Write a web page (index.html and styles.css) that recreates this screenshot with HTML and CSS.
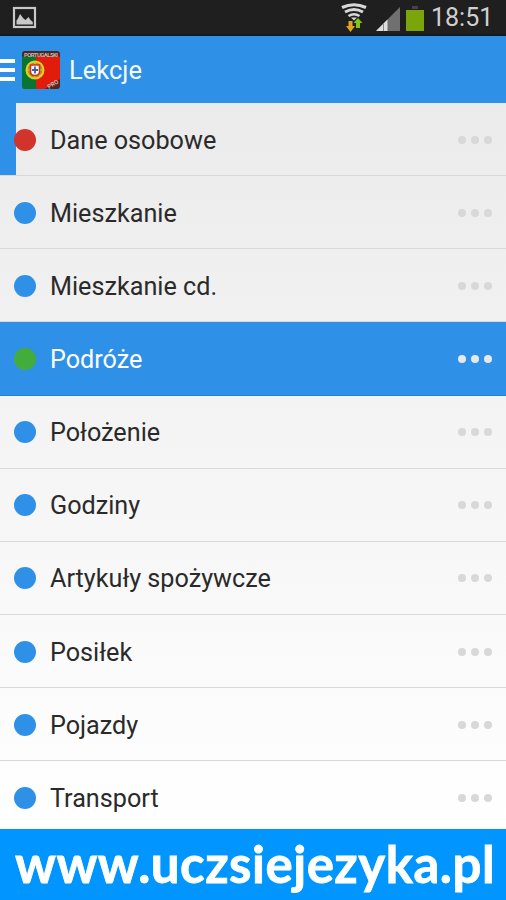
FILE: index.html
```html
<!DOCTYPE html>
<html lang="pl">
<head>
<meta charset="utf-8">
<title>Lekcje</title>
<link rel="stylesheet" href="styles.css">
</head>
<body>
<div class="status">
  <svg class="picture" width="26" height="24" viewBox="0 0 26 24"><rect x="2" y="2" width="21" height="19" fill="none" stroke="#c8c8c8" stroke-width="2.2"/><path d="M4.500 18.500v-4l1.500-2 2-4.500 3.500 4.500 2 1.500 3-3 2 3 2.300 2v2.500z" fill="#c8c8c8"/></svg>
  <div class="indicators">
    <svg width="28" height="30" viewBox="0 0 28 30"><g fill="none" stroke="#d8d8d8"><path d="M2 4.500Q14-1 26 4.500" stroke-width="3.200"/><path d="M5 9Q14 4 23 9" stroke-width="2.800"/><path d="M8.500 13Q14 9.500 19.500 13" stroke-width="2.500"/></g><path d="M11 14.500h6l-3 3z" fill="#d8d8d8"/><path d="M8.500 18h4v5h2.500l-4.500 6-4.500-6h2.500z" fill="#e0a51a"/><path d="M16 25v-5h-2.500l4.500-5 4.500 5H20v5z" fill="#7fc31c"/></svg>
    <svg class="signal" width="24" height="24" viewBox="0 0 24 24"><path d="M0 24L24 0v24z" fill="#707070"/><path d="M0 24L11.500 12.500V24z" fill="#dedede"/><path d="M7.500 16v8" stroke="#888" stroke-width="1"/></svg>
    <svg class="battery" width="18" height="26" viewBox="0 0 18 26"><path d="M6 1h6v3H6z" fill="#444"/><path d="M0 5h18v21H0z" fill="#7aa60b"/></svg>
    <span class="time">18:51</span>
  </div>
</div>
<header class="bar">
  <div class="menu"><i></i><i></i><i></i></div>
  <svg class="flag" width="38" height="38" viewBox="0 0 38 38">
    <defs><clipPath id="round"><rect width="38" height="38" rx="3.500"/></clipPath></defs>
    <g clip-path="url(#round)">
      <path d="M0 0h38v38H0z" fill="#e11c0c"/><path d="M0 0h14v38H0z" fill="#087632"/>
      <circle cx="13" cy="19" r="8.500" fill="#a99b22" stroke="#e5cf25" stroke-width="2"/>
      <path d="M4.500 19h17M13 10.500v17M7 13l12 12" stroke="#e5cf25" stroke-width="1.200"/>
      <path d="M8.500 14h9v6.500q0 4-4.500 4t-4.500-4z" fill="#fff" stroke="#d6301f" stroke-width="1.600"/>
      <path d="M13 15.500v7M10 19h6" stroke="#3c5ca8" stroke-width="1.800"/>
      <path d="M0 0h38v5.500H0z" fill="#4b2923"/>
      <text x="2" y="5.500" class="tag" textLength="34">PORTUGALSKI</text>
      <path d="M23 38L38 28v10z" fill="#56251f"/>
      <text x="27" y="38" class="tag" transform="rotate(-32 27 38)">PRO</text>
    </g>
  </svg>
  <h1>Lekcje</h1>
</header>
<ul class="list">
  <li class="current"><b class="red"></b><span>Dane osobowe</span><div class="more"><i></i><i></i><i></i></div></li>
  <li><b></b><span>Mieszkanie</span><div class="more"><i></i><i></i><i></i></div></li>
  <li><b></b><span>Mieszkanie cd.</span><div class="more"><i></i><i></i><i></i></div></li>
  <li class="selected"><b class="green"></b><span>Podróże</span><div class="more"><i></i><i></i><i></i></div></li>
  <li><b></b><span>Położenie</span><div class="more"><i></i><i></i><i></i></div></li>
  <li><b></b><span>Godziny</span><div class="more"><i></i><i></i><i></i></div></li>
  <li><b></b><span>Artykuły spożywcze</span><div class="more"><i></i><i></i><i></i></div></li>
  <li><b></b><span>Posiłek</span><div class="more"><i></i><i></i><i></i></div></li>
  <li><b></b><span>Pojazdy</span><div class="more"><i></i><i></i><i></i></div></li>
  <li><b></b><span>Transport</span><div class="more"><i></i><i></i><i></i></div></li>
</ul>
<footer class="site">www.uczsiejezyka.pl</footer>
</body>
</html>
```

FILE: styles.css
```css
* { box-sizing: border-box; }
body {
  margin: 0;
  height: 900px;
  overflow: hidden;
  display: flex;
  flex-direction: column;
  font-family: Roboto, sans-serif;
  background: #2f90e8;
}
svg { display: block; flex: none; }
.status {
  height: 36px;
  flex: none;
  background: #1f1f1f;
  border-bottom: 2px solid #101820;
  display: flex;
  justify-content: space-between;
  padding: 0 14px 0 12px;
}
.picture { margin-top: 6px; }
.indicators { display: flex; }
.indicators > svg:first-child { margin: 3px 1px 0 -1px; }
.signal { margin: 7px 0 0 7px; }
.battery { margin: 5px 0 0 6px; }
.time {
  margin-left: 7px;
  width: 61px;
  font-size: 25px;
  line-height: 36px;
  color: #d0d0d0;
  white-space: nowrap;
}
.bar {
  height: 67px;
  flex: none;
  background: #2f90e8;
  display: flex;
  align-items: center;
  padding-top: 1px;
}
.menu { width: 15px; display: grid; gap: 5px; margin-right: 7px; }
.menu i { height: 4px; background: #fff; }
.tag { font: bold 6px Roboto, sans-serif; fill: #c9b6a8; }
h1 {
  margin: 0 0 0 9px;
  font-size: 25.500px;
  font-weight: 400;
  line-height: 36px;
  color: #f4faff;
}
.list {
  margin: 0;
  padding: 0;
  list-style: none;
  height: 726px;
  flex: none;
  overflow: hidden;
  background: linear-gradient(#ebebeb, #fff);
}
.list li {
  height: 73.150px;
  display: flex;
  align-items: center;
  padding: 1px 14px 0;
  border-bottom: 1px solid #d9d9d9;
  font-size: 25.200px;
  color: #2a2a2a;
}
.list li.current {
  background: linear-gradient(90deg, #2f90e8 16px, transparent 16px);
}
.list li.selected {
  background: #2f90e8;
  border-color: #1684e4;
  color: #fff;
}
.list b {
  width: 22px;
  height: 22px;
  border-radius: 50%;
  background: #2f90e8;
  margin-right: 14px;
}
.list b.red { background: #d0342a; }
.list b.green { background: #43ad3c; }
.list span { flex: 1; padding-top: 1px; }
.more { display: flex; gap: 5px; }
.more i {
  width: 8px;
  height: 8px;
  border-radius: 50%;
  background: #d8d8d8;
}
.selected .more i { background: #e8e8e8; }
.site {
  height: 71px;
  flex: none;
  background: #0095ff;
  color: #fff;
  font: 700 51px/70px Lato, sans-serif;
  letter-spacing: 0.500px;
  -webkit-text-stroke: 0.800px #fff;
  padding-left: 15px;
  white-space: nowrap;
}
```
